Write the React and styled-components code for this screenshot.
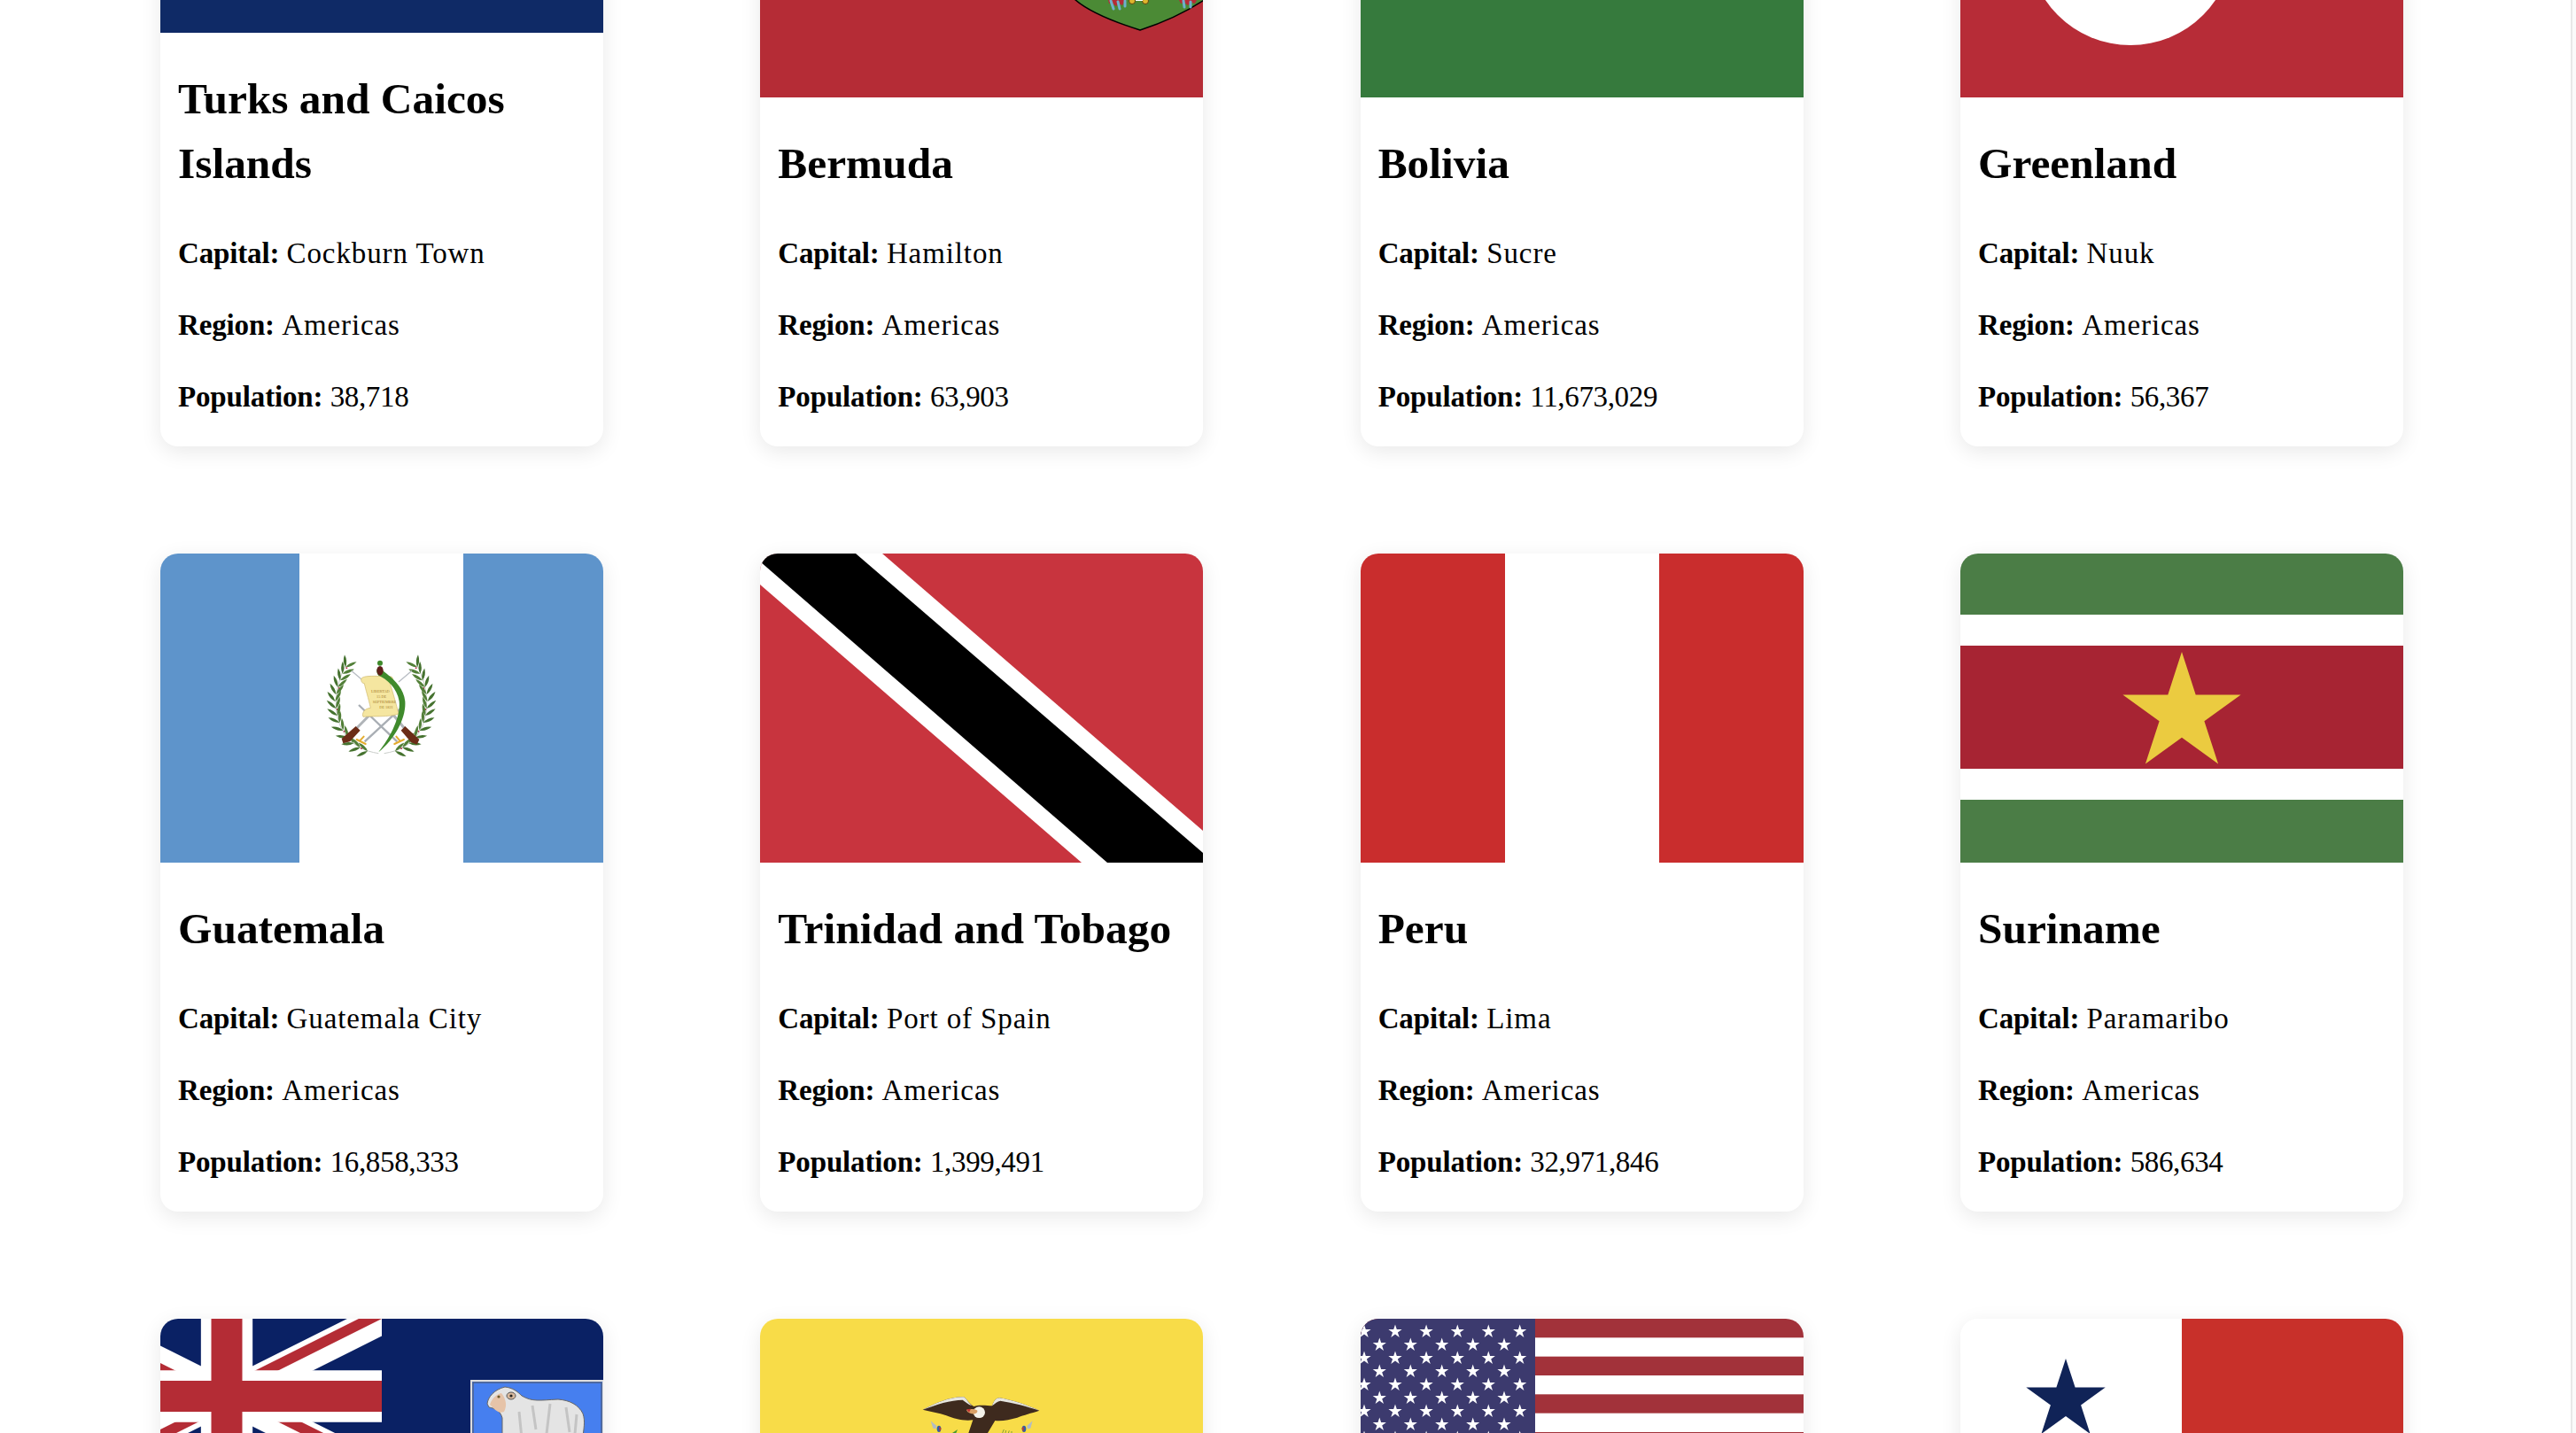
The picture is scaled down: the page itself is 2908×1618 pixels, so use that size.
import React from 'react';
import styled, { createGlobalStyle } from 'styled-components';

const GlobalStyle = createGlobalStyle`
  html, body {
    margin: 0;
    padding: 0;
    background: #fff;
    overflow: hidden;
  }
`;

const Page = styled.div`
  display: flex;
  height: 1618px;
  overflow: hidden;
`;

const Viewport = styled.main`
  flex: 1;
  overflow: hidden;
`;

const ScrollTrack = styled.div`
  width: 4px;
  border-left: 2px solid #e8e8e8;
  background: #fafafa;
`;

const Grid = styled.div`
  display: grid;
  grid-template-columns: repeat(4, 500px);
  column-gap: 177.33px;
  row-gap: 121px;
  margin-top: -239px;
  padding-left: 181px;
`;

const Card = styled.article`
  display: flex;
  flex-direction: column;
  background: #fff;
  border-radius: 20px;
  overflow: hidden;
  box-shadow: 0 6px 24px rgba(0, 0, 0, 0.09);
`;

const FlagBox = styled.div`
  height: ${(p) => p.$height}px;
  svg {
    display: block;
    width: 500px;
    height: ${(p) => p.$height}px;
  }
`;

const Body = styled.div`
  padding: 38px 20px 32px;
`;

const Title = styled.h2`
  margin: 0 0 41px;
  font-family: "Liberation Serif", serif;
  font-size: 49.4px;
  line-height: 73px;
  font-weight: 700;
  color: #000;
`;

const Info = styled.p`
  margin: 0 0 33px;
  font-family: "Liberation Serif", serif;
  font-size: 33px;
  line-height: 48px;
  color: #000;
  &:last-child {
    margin-bottom: 0;
  }
`;

const Label = styled.strong`
  font-weight: 700;
  letter-spacing: -0.15px;
`;

const Value = styled.span`
  letter-spacing: ${(p) => (p.$numeric ? '-0.35px' : '0.9px')};
`;

const starPoints = (cx, cy, r) => {
  const pts = [];
  for (let i = 0; i < 10; i++) {
    const rad = i % 2 ? r * 0.382 : r;
    const a = (Math.PI / 5) * i - Math.PI / 2;
    pts.push(`${(cx + rad * Math.cos(a)).toFixed(1)},${(cy + rad * Math.sin(a)).toFixed(1)}`);
  }
  return pts.join(' ');
};

const Suriname = () => (
  <svg viewBox="0 0 500 349">
    <rect width="500" height="349" fill="#4b7d46" />
    <rect y="69" width="500" height="209" fill="#fff" />
    <rect y="104" width="500" height="139" fill="#a72433" />
    <polygon points={starPoints(250, 181, 70)} fill="#ebcb40" />
  </svg>
);

const Peru = () => (
  <svg viewBox="0 0 500 349">
    <rect width="500" height="349" fill="#c92d2d" />
    <rect x="163" width="174" height="349" fill="#fff" />
  </svg>
);

const Trinidad = () => (
  <svg viewBox="0 0 500 349">
    <rect width="500" height="349" fill="#c8343e" />
    <polygon points="138,0 500,313 500,349 363,349 0,35 0,0" fill="#fff" />
    <polygon points="108,0 500,338 500,349 392,349 0,9 0,0" fill="#000" />
  </svg>
);

const Greenland = () => (
  <svg viewBox="0 0 500 349">
    <rect width="500" height="349" fill="#b72c37" />
    <rect width="500" height="174" fill="#fff" />
    <path d="M76 174 A116 116 0 0 0 308 174 Z" fill="#fff" />
    <path d="M76 174 A116 116 0 0 1 308 174 Z" fill="#b72c37" />
  </svg>
);

const Bermuda = () => (
  <svg viewBox="0 0 500 349">
    <rect width="500" height="349" fill="#b52c36" />
    <path d="M355 238 Q375 256 429 273 Q470 260 503 238 L503 150 L355 150 Z" fill="#4b8a35" stroke="#000" strokeWidth="1.5" />
    <path d="M393 239 l1 4 l4 0 l4 3 l3 -3 l4 2 l3 -6 Z" fill="#b52c36" />
    <path d="M473 239 l2 4 l4 -1 l4 3 l4 -3 l4 1 l2 -4 Z" fill="#b52c36" />
    <path d="M396 240 l3 9 M404 241 l2 8 M412 240 l0 6 M478 240 l1 7 M486 241 l0 6" stroke="#6fb0cc" strokeWidth="3" strokeLinecap="round" />
    <circle cx="420" cy="240" r="3.5" fill="#e0b52d" stroke="#5a4310" />
    <circle cx="435" cy="240" r="3.5" fill="#e0b52d" stroke="#5a4310" />
    <rect x="424" y="238" width="8" height="2" fill="#fff" />
  </svg>
);

// leaf positions along the left branch, drawn again mirrored for the right one
const laurel = [
  [150, 100, -60], [140, 122, -55], [132, 145, -65], [124, 168, -75], [118, 192, -85], [115, 216, -95],
  [118, 240, -105], [123, 264, -112], [130, 288, -122], [142, 314, -130], [158, 338, -138], [178, 358, -150],
  [200, 372, -165], [225, 384, -172],
];

const Branch = () => (
  <g>
    <path d="M150 95 C110 170 105 270 150 330 C175 365 215 385 262 392" fill="none" stroke="#c9cdc9" strokeWidth="3" />
    {laurel.map(([x, y, a], i) => (
      <g key={i} transform={`translate(${x} ${y})`}>
        <path d="M0 0 Q20 -10 42 0 Q20 10 0 0 Z" fill="#45722f" transform={`rotate(${a - 34})`} />
        <path d="M0 0 Q20 -10 42 0 Q20 10 0 0 Z" fill="#527f38" transform={`rotate(${a + 34})`} />
        {i % 3 === 0 && <circle cx="4" cy="3" r="3" fill="#b5304a" />}
      </g>
    ))}
  </g>
);

const Guatemala = () => (
  <svg viewBox="0 0 500 349">
    <rect width="500" height="349" fill="#5e94cb" />
    <rect x="157" width="185" height="349" fill="#fff" />
    <g transform="translate(159 95) scale(0.3333)">
      <Branch />
      <g transform="translate(543 0) scale(-1 1)">
        <Branch />
      </g>
      <path d="M170 112 L215 150 M375 112 L330 150" stroke="#b9bec4" strokeWidth="4" />
      <path d="M195 228 L325 352 M345 232 L215 352" stroke="#a9aeb4" strokeWidth="7" />
      <path d="M232 262 L185 310 M312 262 L352 310" stroke="#b0b4b8" strokeWidth="9" />
      <path d="M185 300 L137 342 L142 358 L165 352 L200 314 Z" fill="#6b2c17" />
      <path d="M352 300 L400 345 L392 362 L372 354 L338 314 Z" fill="#6b2c17" />
      <path d="M198 350 L212 335 M188 345 L218 360" stroke="#e4ac2d" strokeWidth="6" strokeLinecap="round" />
      <path d="M335 350 L322 335 M348 345 L316 360" stroke="#e4ac2d" strokeWidth="6" strokeLinecap="round" />
      <path d="M203 142 C205 130 225 128 305 132 C315 136 308 150 300 152 C312 190 322 225 330 258 C300 270 240 265 210 268 C205 258 212 240 235 238 C228 205 218 175 214 155 C208 155 203 150 203 142 Z" fill="#f5e6a0" stroke="#cdb66b" strokeWidth="2" />
      <text x="268" y="186" textAnchor="middle" fontFamily="Liberation Serif, serif" fontSize="13" fill="#a67c2a">LIBERTAD</text>
      <text x="272" y="204" textAnchor="middle" fontFamily="Liberation Serif, serif" fontSize="13" fill="#a67c2a">15 DE</text>
      <text x="282" y="222" textAnchor="middle" fontFamily="Liberation Serif, serif" fontSize="13" fill="#a67c2a">SEPTIEMBRE</text>
      <text x="288" y="241" textAnchor="middle" fontFamily="Liberation Serif, serif" fontSize="13" fill="#a67c2a">DE 1821</text>
      <path d="M262 100 C276 116 345 150 352 215 C356 270 320 340 262 388 C300 340 338 270 332 215 C325 170 290 140 262 128 C254 118 254 108 262 100 Z" fill="#3f8a2c" />
      <ellipse cx="267" cy="112" rx="11" ry="16" fill="#5f1f1a" />
      <circle cx="267" cy="86" r="9" fill="#3f8a2c" />
    </g>
  </svg>
);

const Turks = () => (
  <svg viewBox="0 0 500 276">
    <rect width="500" height="276" fill="#0f2a66" />
  </svg>
);

const Bolivia = () => (
  <svg viewBox="0 0 500 349">
    <rect width="500" height="349" fill="#367a3d" />
  </svg>
);

const Falkland = () => (
  <svg viewBox="0 0 500 349">
    <defs>
      <clipPath id="jackBox">
        <rect x="-100" y="0" width="350" height="175" />
      </clipPath>
      <clipPath id="jackTri">
        <path d="M30,15 h30 v15 z v15 h-30 z h-30 v-15 z v-15 h30 z" />
      </clipPath>
    </defs>
    <rect width="500" height="349" fill="#0a2164" />
    <g clipPath="url(#jackBox)">
      <g transform="translate(-100 0) scale(5.8333)">
        <path d="M0,0 L60,30 M60,0 L0,30" stroke="#fff" strokeWidth="6" />
        <path d="M0,0 L60,30 M60,0 L0,30" stroke="#b42c35" strokeWidth="4" clipPath="url(#jackTri)" />
        <path d="M30,0 v30 M0,15 h60" stroke="#fff" strokeWidth="10" />
        <path d="M30,0 v30 M0,15 h60" stroke="#b42c35" strokeWidth="6" />
      </g>
    </g>
    <rect x="351" y="70" width="149" height="279" fill="#467fef" stroke="#ddd" strokeWidth="2" />
    <rect x="353" y="72" width="145" height="277" fill="none" stroke="#555" strokeWidth="1" />
    <path d="M369 96 C370 88 377 80 389 77 C398 78 403 82 408 87 C420 94 428 92 449 91 C462 92 472 97 477 107 C480 116 478 124 476 140 L386 140 L386 112 C384 104 378 101 371 100 Z" fill="#e4e4e4" stroke="#666" strokeWidth="1" />
    <path d="M420 98 L424 125 M440 96 L436 130 M458 100 L462 128 M405 105 L408 135 M470 108 L468 130" stroke="#c4c4c4" strokeWidth="3" />
    <path d="M372 97 C374 90 380 85 385 84 C390 90 392 98 388 105 C382 108 377 102 372 97 Z" fill="#e6c3a8" />
    <ellipse cx="396" cy="87" rx="5" ry="4" fill="#d8b89c" stroke="#555" />
    <circle cx="396" cy="87" r="1.6" fill="#222" />
    <circle cx="382" cy="88" r="1.6" fill="#6b5a2a" />
  </svg>
);

const Ecuador = () => (
  <svg viewBox="0 0 500 349">
    <rect width="500" height="349" fill="#f8dc48" />
    <g transform="translate(162 71) scale(0.3333)">
      <path d="M65 95 C110 72 160 50 205 52 C215 60 222 75 238 84 C252 78 280 80 300 82 C305 68 312 55 325 55 C370 62 420 80 460 98 C430 108 410 112 385 122 C360 128 335 135 310 132 L285 174 L220 174 L235 130 C205 135 170 125 145 115 C120 105 90 102 65 95 Z" fill="#3e2a1e" />
      <path d="M65 95 C110 72 160 50 205 52 C215 60 222 75 232 82 C218 78 210 68 200 62 C160 62 110 78 65 95 Z" fill="#e6e6e0" />
      <path d="M460 98 C420 80 370 62 325 55 C312 55 305 68 300 82 C310 75 318 66 328 65 C370 72 420 84 460 98 Z" fill="#e6e6e0" />
      <ellipse cx="256" cy="104" rx="20" ry="19" fill="#f4f2ea" />
      <path d="M213 96 C225 92 245 92 250 98 C252 106 240 112 228 108 C220 106 215 102 213 96 Z" fill="#d9a066" />
      <path d="M213 94 L228 92 L222 104 Z" fill="#c03030" />
      <path d="M92 133 L112 150 L110 160 L100 158 Z M437 133 L418 150 L420 160 L430 158 Z" fill="#b3bcc4" />
      <ellipse cx="120" cy="160" rx="7" ry="11" fill="#2f5fa8" />
      <ellipse cx="408" cy="160" rx="7" ry="11" fill="#2f5fa8" />
      <path d="M120 152 L128 158 L122 170 Z M408 152 L400 158 L406 170 Z" fill="#c23a30" />
      <path d="M165 174 L183 162 L178 174 Z" fill="#46982e" />
      <path d="M335 174 L340 162 M345 174 L347 165 M355 174 L358 166 M366 174 L366 168" stroke="#46822e" strokeWidth="2" />
    </g>
  </svg>
);

const Usa = () => {
  const stripes = [0, 2, 4, 6, 8].map((n) => n * 21.33);
  const rows = [0, 1, 2, 3, 4, 5, 6, 7, 8];
  return (
    <svg viewBox="0 0 500 349">
      <rect width="500" height="349" fill="#fff" />
      {stripes.map((y) => (
        <rect key={y} y={y} width="500" height="21.33" fill="#a2323a" />
      ))}
      <rect width="197" height="200" fill="#3c3a6e" />
      {rows.map((r) => {
        const odd = r % 2 === 1;
        const xs = odd ? [21.3, 56.3, 91.7, 126.7, 162] : [4, 39, 74.1, 109.3, 144.3, 179.7];
        return xs.map((x) => (
          <polygon key={`${r}-${x}`} points={starPoints(x, 14.5 + r * 15, 8)} fill="#fff" />
        ));
      })}
    </svg>
  );
};

const Panama = () => (
  <svg viewBox="0 0 500 349">
    <rect width="500" height="349" fill="#fff" />
    <rect x="250" width="250" height="175" fill="#c8302a" />
    <polygon points={starPoints(119, 92, 47)} fill="#102357" />
  </svg>
);

const countries = [
  { id: 'tca', name: 'Turks and Caicos Islands', capital: 'Cockburn Town', population: '38,718', Flag: Turks, height: 276 },
  { id: 'bmu', name: 'Bermuda', capital: 'Hamilton', population: '63,903', Flag: Bermuda, height: 349 },
  { id: 'bol', name: 'Bolivia', capital: 'Sucre', population: '11,673,029', Flag: Bolivia, height: 349 },
  { id: 'grl', name: 'Greenland', capital: 'Nuuk', population: '56,367', Flag: Greenland, height: 349 },
  { id: 'gtm', name: 'Guatemala', capital: 'Guatemala City', population: '16,858,333', Flag: Guatemala, height: 349 },
  { id: 'tto', name: 'Trinidad and Tobago', capital: 'Port of Spain', population: '1,399,491', Flag: Trinidad, height: 349 },
  { id: 'per', name: 'Peru', capital: 'Lima', population: '32,971,846', Flag: Peru, height: 349 },
  { id: 'sur', name: 'Suriname', capital: 'Paramaribo', population: '586,634', Flag: Suriname, height: 349 },
  // the last row runs off the bottom of the window, only the flags show
  { id: 'flk', Flag: Falkland, height: 349 },
  { id: 'ecu', Flag: Ecuador, height: 349 },
  { id: 'usa', Flag: Usa, height: 349 },
  { id: 'pan', Flag: Panama, height: 349 },
];

function CountryCard({ country }) {
  const { name, capital, population, Flag, height } = country;
  return (
    <Card>
      <FlagBox $height={height}>
        <Flag />
      </FlagBox>
      {name && (
        <Body>
          <Title>{name}</Title>
          <Info><Label>Capital:</Label> <Value>{capital}</Value></Info>
          <Info><Label>Region:</Label> <Value>Americas</Value></Info>
          <Info><Label>Population:</Label> <Value $numeric>{population}</Value></Info>
        </Body>
      )}
    </Card>
  );
}

export default function App() {
  return (
    <Page>
      <GlobalStyle />
      <Viewport>
        <Grid>
          {countries.map((c) => (
            <CountryCard key={c.id} country={c} />
          ))}
        </Grid>
      </Viewport>
      <ScrollTrack />
    </Page>
  );
}
